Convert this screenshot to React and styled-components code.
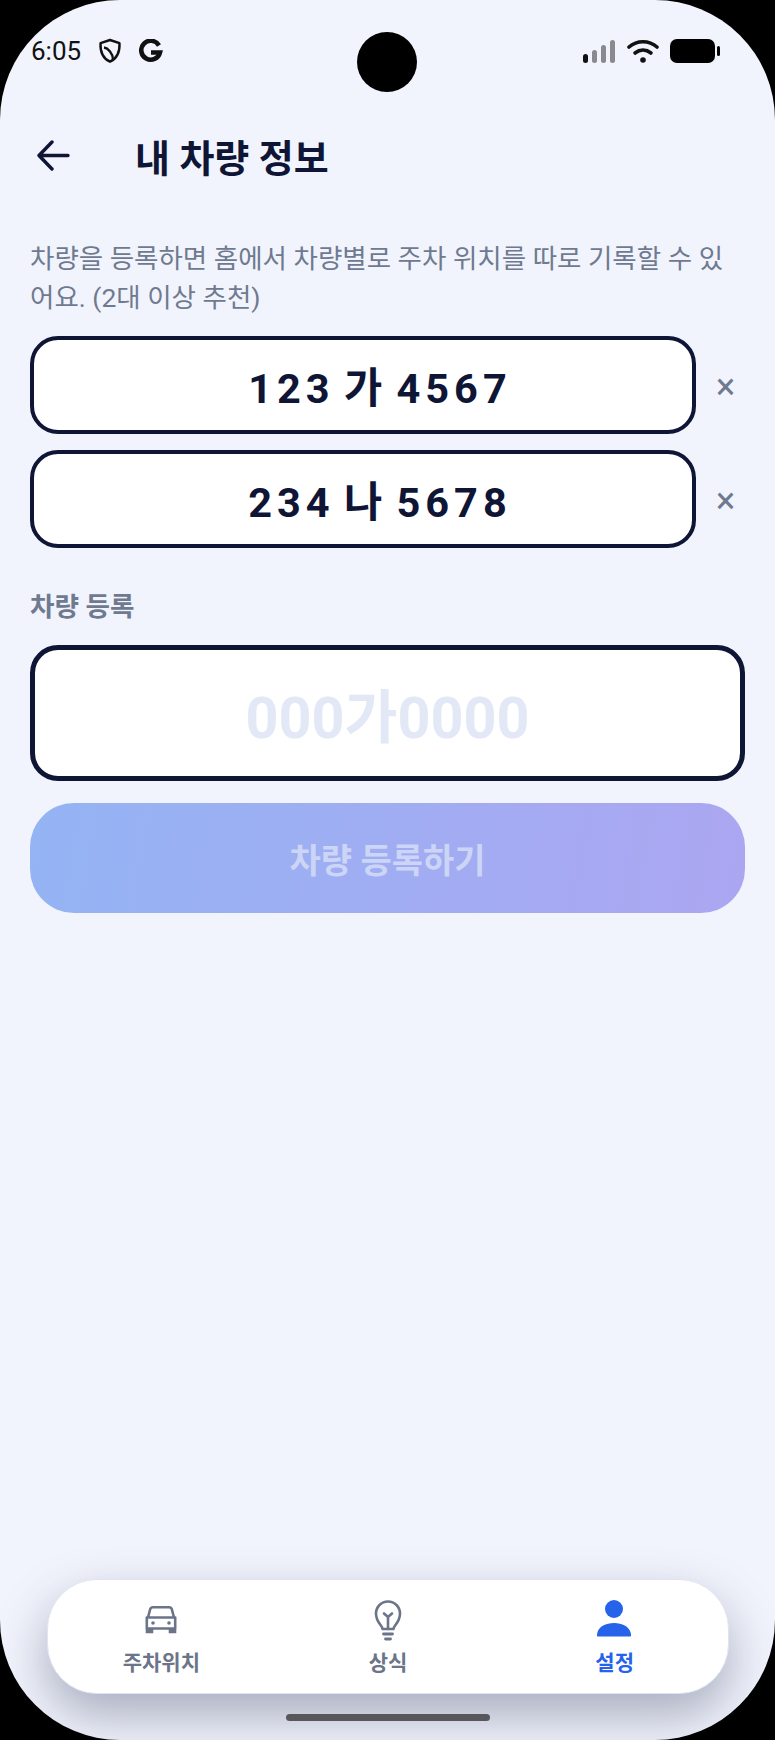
import React from 'react';
import styled, { createGlobalStyle } from 'styled-components';

const GlobalStyle = createGlobalStyle`
  html, body {
    margin: 0;
    padding: 0;
    background: #000;
  }
  * {
    box-sizing: border-box;
  }
`;

const Screen = styled.div`
  position: relative;
  width: 775px;
  height: 1740px;
  display: flex;
  flex-direction: column;
  overflow: hidden;
  border-radius: 120px;
  background: #f1f4fc;
  font-family: Roboto, 'Noto Sans CJK KR', sans-serif;
  color: #0f1535;
`;

const StatusBar = styled.div`
  height: 102px;
  padding: 32px 55px 0 31px;
  display: flex;
  justify-content: space-between;
  align-items: flex-start;
  flex: none;
`;

const StatusGroup = styled.div`
  display: flex;
  align-items: center;
  height: 38px;
  gap: ${({ $gap }) => $gap}px;
`;

const Clock = styled.span`
  font-size: 26px;
  color: #111;
`;

const Camera = styled.div`
  position: absolute;
  top: 32px;
  left: 357px;
  width: 60px;
  height: 60px;
  border-radius: 50%;
  background: #000;
`;

const Header = styled.header`
  display: flex;
  align-items: center;
  height: 70px;
  margin-top: 18px;
  padding-left: 37px;
  flex: none;
`;

const BackIcon = styled.svg`
  width: 33px;
  height: 33px;
  flex: none;
`;

const Title = styled.h1`
  margin: 0 0 0 65px;
  font-size: 38px;
  font-weight: 700;
  color: #0f1535;
`;

const Content = styled.main`
  padding: 0 30px;
  flex: none;
`;

const Description = styled.p`
  margin: 49px 0 0;
  width: 710px;
  font-size: 26.5px;
  line-height: 39px;
  color: #6f7a90;
`;

const PlateList = styled.div`
  margin-top: 19px;
  display: flex;
  flex-direction: column;
  gap: 16px;
`;

const PlateRow = styled.div`
  display: flex;
  align-items: center;
`;

const Plate = styled.div`
  width: 666px;
  height: 98px;
  display: flex;
  align-items: center;
  justify-content: center;
  padding-left: 34px;
  border: 4px solid #0f1535;
  border-radius: 28px;
  background: #fff;
  font-size: 41.5px;
  font-weight: 700;
  letter-spacing: 5px;
  word-spacing: -6px;
  color: #0f1535;
`;

const RemoveButton = styled.span`
  margin: 4px 0 0 20px;
  font-size: 36px;
  font-weight: 400;
  line-height: 1;
  color: #6f7a90;
`;

const SectionLabel = styled.div`
  margin-top: 39px;
  font-size: 26.6px;
  line-height: 40px;
  font-weight: 700;
  color: #6f7a90;
`;

const PlateInput = styled.div`
  margin-top: 18px;
  height: 136px;
  display: flex;
  align-items: center;
  justify-content: center;
  border: 5px solid #0f1535;
  border-radius: 28px;
  background: #fff;
  font-size: 57.5px;
  font-weight: 700;
  color: #e2e8f5;
`;

const SubmitButton = styled.div`
  margin-top: 22px;
  height: 110px;
  display: flex;
  align-items: center;
  justify-content: center;
  border-radius: 44px;
  background: linear-gradient(100deg, #94b4f4 0%, #aca6f1 100%);
  font-size: 34px;
  font-weight: 700;
  color: #cdd5f6;
`;

const NavBar = styled.nav`
  margin: auto 46px 0 47px;
  height: 115px;
  flex: none;
  display: grid;
  grid-template-columns: repeat(3, 1fr);
  border-radius: 50px;
  background: #fff;
  border: 1px solid #e0e4f2;
  box-shadow: 0 22px 50px rgba(50, 55, 90, 0.38);
`;

const NavItem = styled.div`
  display: flex;
  flex-direction: column;
  align-items: center;
  justify-content: flex-end;
  padding-bottom: 16px;
  color: ${({ $active }) => ($active ? '#2563eb' : '#6b7488')};
`;

const NavIcon = styled.svg`
  width: 44px;
  height: 44px;
  margin-bottom: 6px;
`;

const NavLabel = styled.span`
  font-size: 21px;
  line-height: 28px;
  font-weight: 700;
`;

const HomeIndicator = styled.div`
  margin: 20px auto 19px;
  width: 204px;
  height: 7px;
  flex: none;
  border-radius: 4px;
  background: #58585c;
`;

const NAV = [
  {
    label: '주차위치',
    icon: (
      <g fill="none" stroke="currentColor" strokeWidth="2.6">
        <path d="M9 18.500l2.200-8.300c.4-1.400 1.400-2 2.700-2h16.200c1.300 0 2.300.6 2.700 2l2.200 8.300" />
        <path d="M7.800 18.500h28.400v11H7.800z" strokeLinejoin="round" />
        <path d="M8 30v3h5v-3M31 30v3h5v-3" fill="currentColor" />
        <circle cx="14" cy="24" r="1.800" fill="currentColor" stroke="none" />
        <circle cx="30" cy="24" r="1.800" fill="currentColor" stroke="none" />
      </g>
    ),
  },
  {
    label: '상식',
    icon: (
      <g fill="none" stroke="currentColor" strokeWidth="2.600" strokeLinecap="round">
        <path d="M16.500 30c0-3.500-6.500-6.500-6.500-15.500a12 12 0 0 1 24 0c0 9-6.500 12-6.500 15.500z" strokeLinejoin="round" />
        <path d="M22 30V18M18 14.500l4 3.500 4-3.500" />
        <path d="M17.500 35h9M19.500 40h5" strokeWidth="2.800" />
      </g>
    ),
  },
  {
    label: '설정',
    active: true,
    icon: (
      <g fill="currentColor">
        <circle cx="21" cy="10" r="9" />
        <path d="M4 36.500c0-1 .1-2 .4-3 1.800-6 8.200-9.500 16.600-9.500s14.800 3.500 16.600 9.500c.3 1 .4 2 .4 3 0 .6-.4 1-1 1H5c-.6 0-1-.4-1-1z" />
      </g>
    ),
  },
];

const App = () => (
  <>
    <GlobalStyle />
    <Screen>
      <StatusBar>
        <StatusGroup $gap={17}>
          <Clock>6:05</Clock>
          <svg width="24" height="26" viewBox="0 0 24 26" fill="none" stroke="#111" strokeWidth="2.400">
            <path d="M12 2l9.500 3.200c.4 8.500-1.500 14.800-9.500 18.500C4 20 2.100 13.700 2.500 5.200z" strokeLinejoin="round" />
            <path d="M6 9.500c4 .5 9 6 9 12" />
          </svg>
          <svg width="24" height="24" viewBox="0 0 24 24" fill="none" stroke="#111" strokeWidth="4.600">
            <path d="M20 6.500A9.500 9.500 0 1 0 21 13.500H12" />
          </svg>
        </StatusGroup>
        <StatusGroup $gap={11}>
          <svg width="33" height="24" viewBox="0 0 33 24">
            <rect x="0" y="15" width="5" height="9" rx="2.500" fill="#111" />
            <rect x="9" y="11" width="5" height="13" rx="2.500" fill="#8a8a8e" />
            <rect x="18" y="6" width="5" height="18" rx="2.500" fill="#8a8a8e" />
            <rect x="27" y="1" width="5" height="23" rx="2.500" fill="#8a8a8e" />
          </svg>
          <svg width="32" height="24" viewBox="0 0 32 24" fill="none" stroke="#111" strokeWidth="3.600" strokeLinecap="round">
            <path d="M2 8c8-7 20-7 28 0" />
            <path d="M8 14c5-4 11-4 16 0" />
            <circle cx="16" cy="21" r="2.800" fill="#111" stroke="none" />
          </svg>
          <svg width="50" height="26" viewBox="0 0 50 26">
            <rect x="0" y="1" width="45" height="24" rx="7" fill="#000" />
            <rect x="47" y="8" width="3" height="10" rx="1.500" fill="#000" />
          </svg>
        </StatusGroup>
      </StatusBar>
      <Camera />
      <Header>
        <BackIcon viewBox="0 0 33 33" fill="none" stroke="#0f1535" strokeWidth="3.400" strokeLinecap="round" strokeLinejoin="round">
          <path d="M31 16.500H2M15 3L2 16.500 15 30" />
        </BackIcon>
        <Title>내 차량 정보</Title>
      </Header>
      <Content>
        <Description>차량을 등록하면 홈에서 차량별로 주차 위치를 따로 기록할 수 있어요. (2대 이상 추천)</Description>
        <PlateList>
          <PlateRow>
            <Plate>123 가 4567</Plate>
            <RemoveButton>×</RemoveButton>
          </PlateRow>
          <PlateRow>
            <Plate>234 나 5678</Plate>
            <RemoveButton>×</RemoveButton>
          </PlateRow>
        </PlateList>
        <SectionLabel>차량 등록</SectionLabel>
        <PlateInput>000가0000</PlateInput>
        <SubmitButton>차량 등록하기</SubmitButton>
      </Content>
      <NavBar>
        {NAV.map((item) => (
          <NavItem key={item.label} $active={item.active}>
            <NavIcon viewBox="0 0 44 44">{item.icon}</NavIcon>
            <NavLabel>{item.label}</NavLabel>
          </NavItem>
        ))}
      </NavBar>
      <HomeIndicator />
    </Screen>
  </>
);

export default App;
